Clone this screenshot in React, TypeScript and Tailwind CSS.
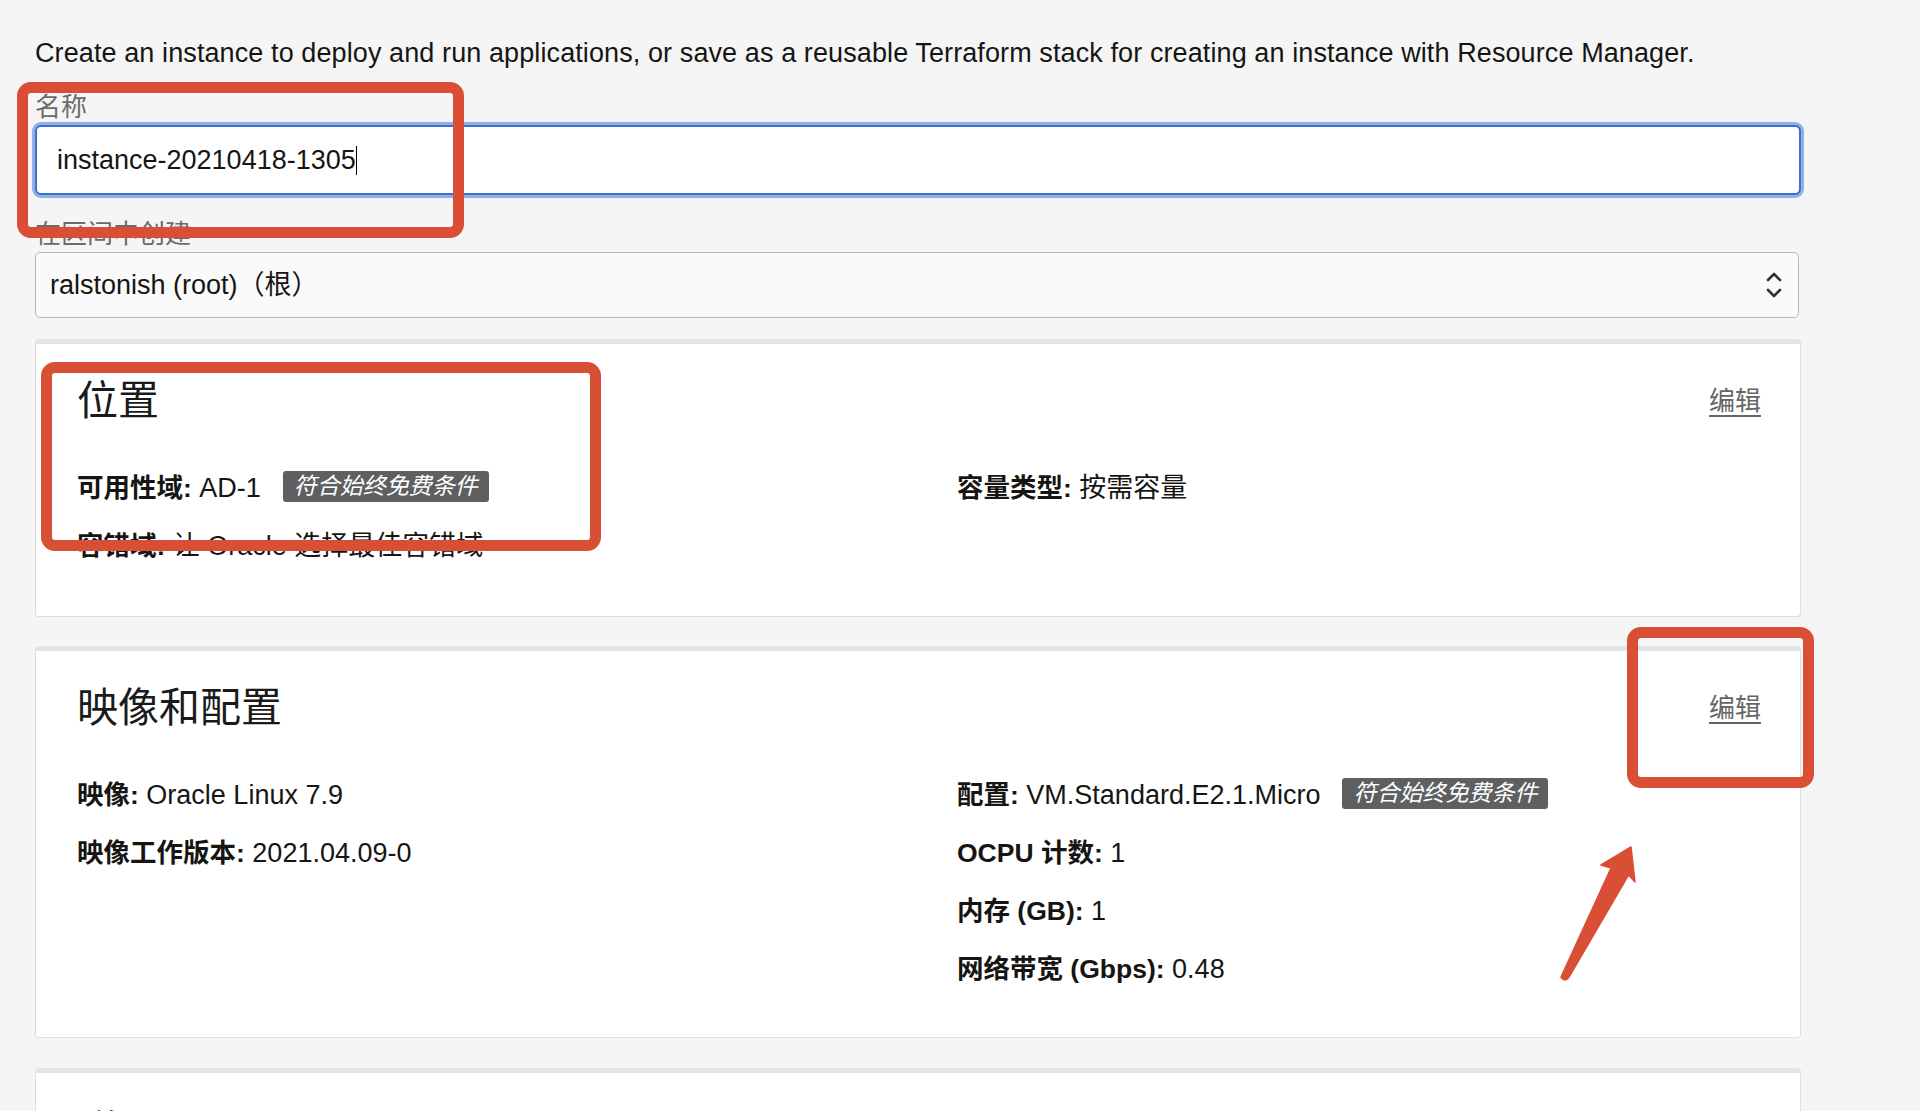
import React from "react";

const FONT = {
  fontFamily: '"Liberation Sans", "Noto Sans CJK SC", sans-serif',
};

function FreeTierBadge() {
  return (
    <span className="ml-[22px] inline-flex h-[31px] items-center rounded-[3px] bg-[#5e5f61] px-[11px] text-[23px] italic leading-none text-white">
      符合始终免费条件
    </span>
  );
}

function Field({
  label,
  value,
  badge,
}: {
  label: string;
  value: string;
  badge?: boolean;
}) {
  return (
    <div className="flex h-[34px] items-start whitespace-nowrap text-[27px] leading-[34px] text-[#161513]">
      <span>
        <span className="text-[26.5px] font-bold">{label}:</span> {value}
      </span>
      {badge && <FreeTierBadge />}
    </div>
  );
}

function SectionCard({
  title,
  left,
  right,
  bottom,
}: {
  title: string;
  left: React.ReactNode;
  right: React.ReactNode;
  bottom: string;
}) {
  return (
    <div
      className={`rounded-[4px] border border-t-[5px] border-[#dedede] border-t-[#e3e4e6] bg-white pl-[41px] pr-[39px] pt-[33px] ${bottom}`}
    >
      <div className="flex items-center justify-between">
        <h2 className="text-[41px] font-normal leading-[48px] text-[#1a1a1a]">
          {title}
        </h2>
        <a className="text-[26px] leading-[34px] text-[#666] underline underline-offset-[5px]">
          编辑
        </a>
      </div>
      <div className="mt-[46px] grid grid-cols-[880px_1fr]">
        <div className="flex flex-col gap-[24px]">{left}</div>
        <div className="flex flex-col gap-[24px]">{right}</div>
      </div>
    </div>
  );
}

function Chevrons() {
  return (
    <svg width="18" height="30" viewBox="0 0 18 30" fill="none">
      <path
        d="M3 10 L9 4 L15 10"
        stroke="#333"
        strokeWidth="2.6"
        strokeLinecap="round"
        strokeLinejoin="round"
      />
      <path
        d="M3 20 L9 26 L15 20"
        stroke="#333"
        strokeWidth="2.6"
        strokeLinecap="round"
        strokeLinejoin="round"
      />
    </svg>
  );
}

// red annotation frames drawn on top of the page
function Callout({ className }: { className: string }) {
  return (
    <div
      className={`pointer-events-none absolute rounded-[14px] border-[11px] border-[#d94f35] ${className}`}
    />
  );
}

function Arrow() {
  return (
    <svg
      className="pointer-events-none absolute left-[1540px] top-[820px]"
      width="120"
      height="180"
      viewBox="0 0 120 180"
    >
      <path
        d="M91 27 L95 62 L88.5 55 L29 157 Q25 163 21 157 L71 48 L61 45 Z"
        fill="#d94f35"
        stroke="#d94f35"
        strokeWidth="1.5"
        strokeLinejoin="round"
      />
    </svg>
  );
}

export default function App() {
  return (
    <div className="relative h-[1111px] overflow-hidden bg-[#f5f5f5]" style={FONT}>
      <div className="ml-[35px] w-[1766px] pt-[38px]">
        <p className="text-[27px] leading-[30px] tracking-[0.1px] text-[#161513]">
          Create an instance to deploy and run applications, or save as a
          reusable Terraform stack for creating an instance with Resource
          Manager.
        </p>

        <label className="mt-[24px] block text-[26px] leading-[30px] text-[#6b6b6b]">
          名称
        </label>
        <div className="mt-[3px] flex h-[70px] items-center rounded-[6px] border-2 border-[#3d6fc9] bg-white pl-[20px] shadow-[0_0_0_3px_#8fb0e8]">
          <span className="text-[27px] text-[#161513]">instance-20210418-1305</span>
          <span className="inline-block h-[29px] w-[1.5px] bg-black" />
        </div>

        <label className="mt-[24px] block text-[26px] leading-[30px] text-[#6b6b6b]">
          在区间中创建
        </label>
        <div className="mt-[3px] flex h-[66px] w-[1764px] items-center justify-between rounded-[5px] border border-[#b8b8b8] bg-[#fafafa] pl-[14px] pr-[15px]">
          <span className="text-[27px] text-[#161513]">ralstonish (root)（根）</span>
          <Chevrons />
        </div>

        <div className="mt-[21px]">
          <SectionCard
            title="位置"
            bottom="pb-[53px]"
            left={
              <>
                <Field label="可用性域" value="AD-1" badge />
                <Field label="容错域" value="让 Oracle 选择最佳容错域" />
              </>
            }
            right={<Field label="容量类型" value="按需容量" />}
          />
        </div>

        <div className="mt-[29px]">
          <SectionCard
            title="映像和配置"
            bottom="pb-[51px]"
            left={
              <>
                <Field label="映像" value="Oracle Linux 7.9" />
                <Field label="映像工作版本" value="2021.04.09-0" />
              </>
            }
            right={
              <>
                <Field label="配置" value="VM.Standard.E2.1.Micro" badge />
                <Field label="OCPU 计数" value="1" />
                <Field label="内存 (GB)" value="1" />
                <Field label="网络带宽 (Gbps)" value="0.48" />
              </>
            }
          />
        </div>

        <div className="mt-[30px] h-[60px] rounded-t-[4px] border border-b-0 border-t-[5px] border-[#dedede] border-t-[#e3e4e6] bg-white pl-[41px] pt-[33px]">
          <h2 className="text-[41px] font-normal leading-[48px] text-[#1a1a1a]">联网</h2>
        </div>
      </div>

      <Callout className="left-[17px] top-[82px] h-[156px] w-[447px]" />
      <Callout className="left-[41px] top-[362px] h-[189px] w-[560px]" />
      <Callout className="left-[1627px] top-[627px] h-[161px] w-[187px]" />
      <Arrow />
    </div>
  );
}
